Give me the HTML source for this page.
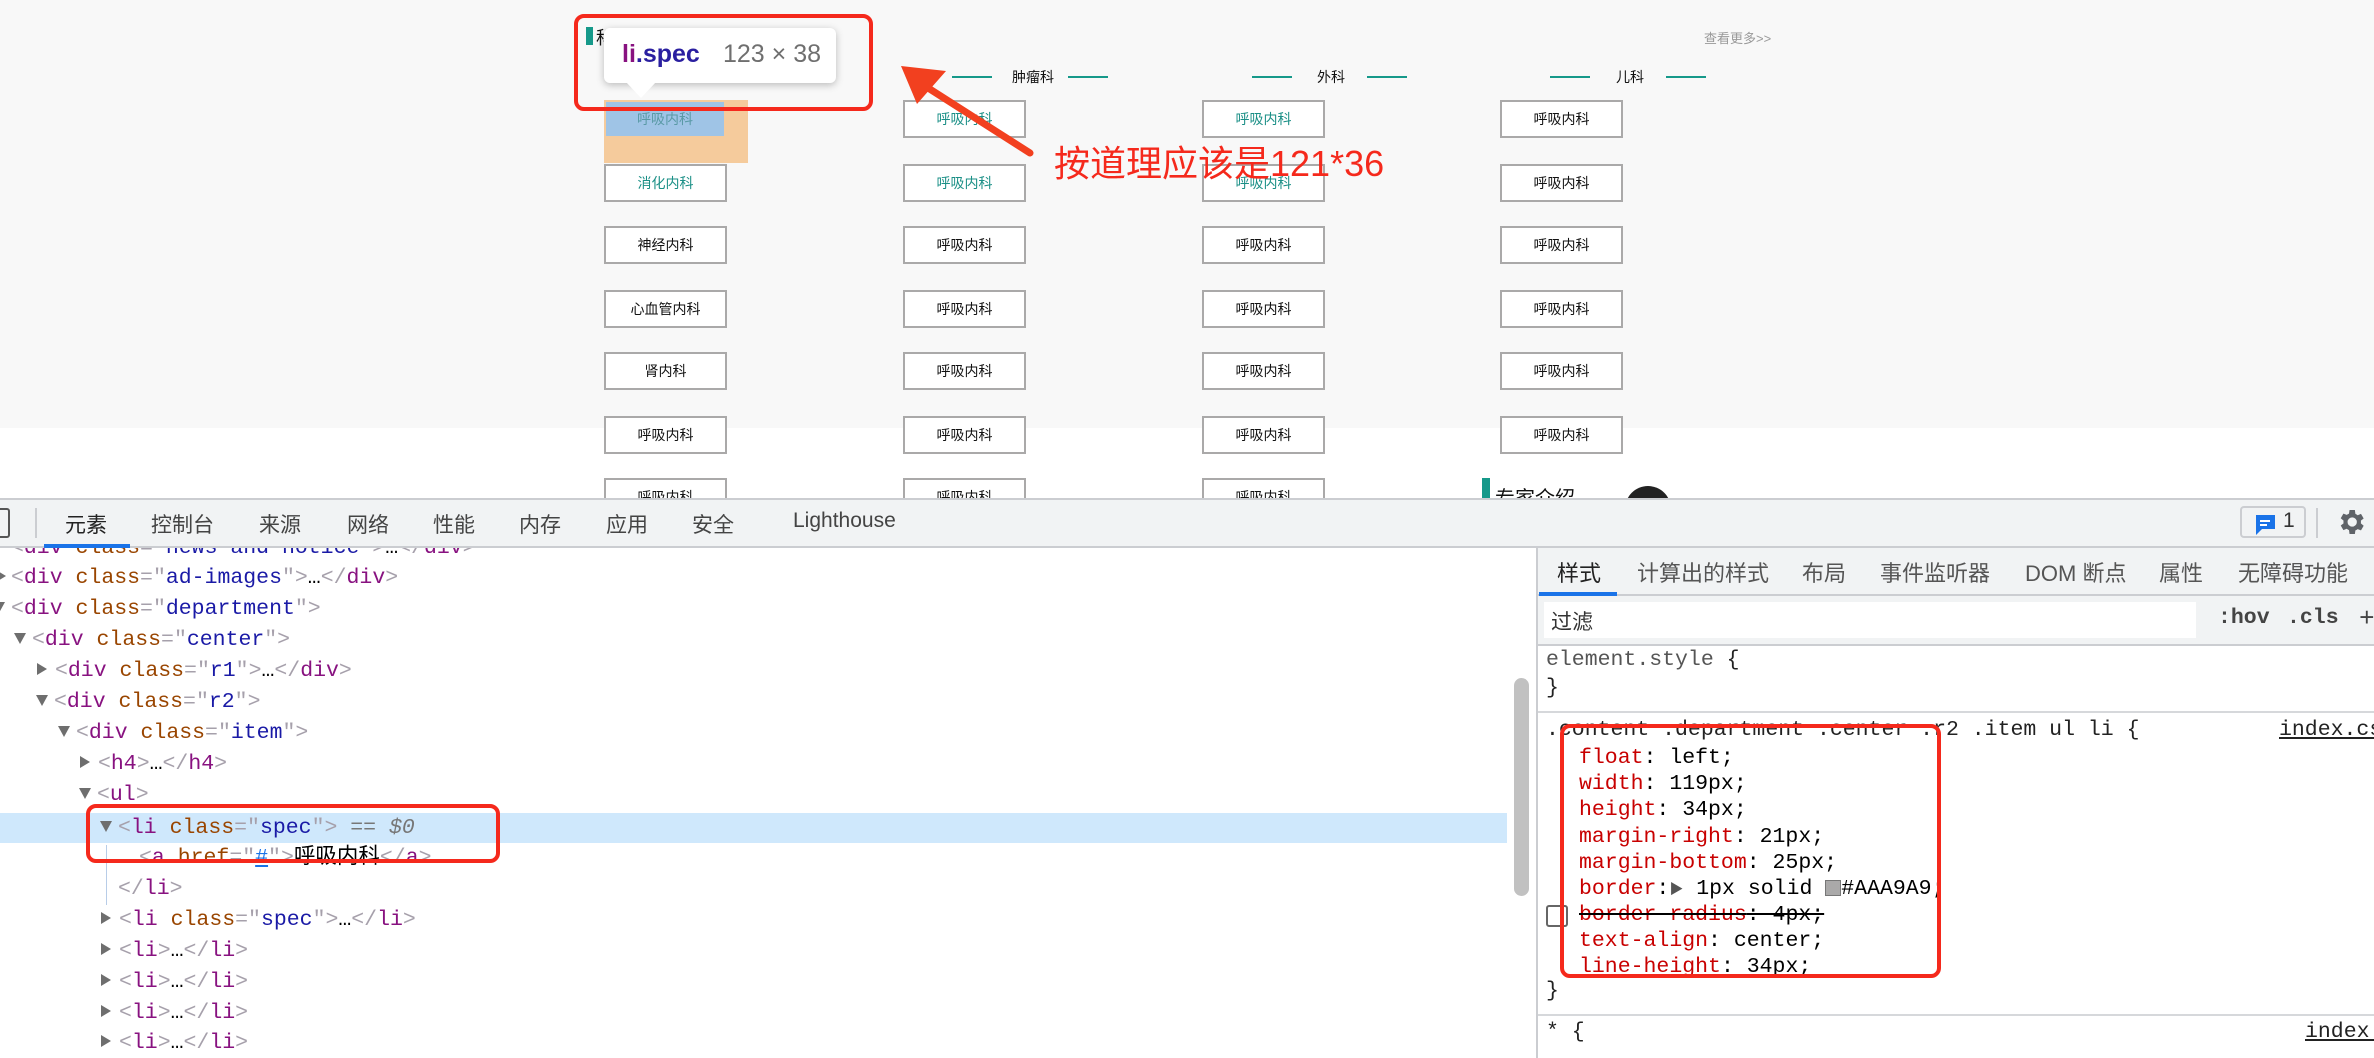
<!DOCTYPE html>
<html><head><meta charset="utf-8"><style>
*{margin:0;padding:0;box-sizing:border-box}
body{width:2374px;height:1058px;position:relative;overflow:hidden;background:#fff;font-family:"Liberation Sans","Noto Sans CJK SC",sans-serif}
.a{position:absolute}
.btn{position:absolute;width:123px;height:38px;border:2px solid #aaa9a9;background:#fff;text-align:center;line-height:34px;font-size:14px;color:#111;white-space:nowrap}
.t{color:#1a8f86}
.hd{position:absolute;top:67px;font-size:14px;color:#111;white-space:nowrap}
.ln{position:absolute;top:76px;width:40px;height:2px;background:#16998a}
.mono{font-family:"Liberation Mono","Noto Sans CJK SC",monospace;font-size:21.5px;white-space:nowrap}
.el{position:absolute;left:0;height:31px;line-height:31px}
.g{color:#a6a0ab}.p{color:#881280}.b{color:#994500}.v{color:#1a1aa6}
.tri{display:inline-block;width:0;height:0;border-left:6px solid transparent;border-right:6px solid transparent;border-top:11px solid #6e6e6e;margin-right:6px;vertical-align:1px}
.trr{display:inline-block;width:0;height:0;border-top:6px solid transparent;border-bottom:6px solid transparent;border-left:10px solid #6e6e6e;margin-right:8px;vertical-align:1px}
.tab{position:absolute;top:509px;font-size:21px;color:#444;white-space:nowrap}
.st{position:absolute;top:556px;font-size:22px;color:#555;white-space:nowrap}
.sp{position:absolute;left:1579px;height:26px;line-height:26px}
.r{color:#c80000}
</style></head><body>
<div class="a" style="left:0;top:0;width:2374px;height:428px;background:#f8f8f8"></div>
<div class="a" style="left:586px;top:27px;width:7px;height:18px;background:#16998a"></div>
<div class="a" style="left:596px;top:24px;font-size:18px;color:#111">科</div>
<div class="a" style="left:1704px;top:28px;font-size:13px;color:#999">查看更多&gt;&gt;</div>

<div class="ln" style="left:952px"></div><div class="hd" style="left:1012px">肿瘤科</div><div class="ln" style="left:1068px"></div>
<div class="ln" style="left:1252px"></div><div class="hd" style="left:1317px">外科</div><div class="ln" style="left:1367px"></div>
<div class="ln" style="left:1550px"></div><div class="hd" style="left:1616px">儿科</div><div class="ln" style="left:1666px"></div>

<div class="a" style="left:604px;top:100px;width:144px;height:63px;background:#f5cb9c"></div>
<div class="a" style="left:606px;top:102px;width:118px;height:34px;background:#9fc4e6;text-align:center;line-height:34px;font-size:14px;color:#5a9aa6">呼吸内科</div>

<div class="btn t" style="left:604px;top:164px">消化内科</div>
<div class="btn" style="left:604px;top:226px">神经内科</div>
<div class="btn" style="left:604px;top:290px">心血管内科</div>
<div class="btn" style="left:604px;top:352px">肾内科</div>
<div class="btn" style="left:604px;top:416px">呼吸内科</div>
<div class="btn" style="left:604px;top:478px">呼吸内科</div>

<div class="btn t" style="left:903px;top:100px">呼吸内科</div>
<div class="btn t" style="left:903px;top:164px">呼吸内科</div>
<div class="btn" style="left:903px;top:226px">呼吸内科</div>
<div class="btn" style="left:903px;top:290px">呼吸内科</div>
<div class="btn" style="left:903px;top:352px">呼吸内科</div>
<div class="btn" style="left:903px;top:416px">呼吸内科</div>
<div class="btn" style="left:903px;top:478px">呼吸内科</div>

<div class="btn t" style="left:1202px;top:100px">呼吸内科</div>
<div class="btn t" style="left:1202px;top:164px">呼吸内科</div>
<div class="btn" style="left:1202px;top:226px">呼吸内科</div>
<div class="btn" style="left:1202px;top:290px">呼吸内科</div>
<div class="btn" style="left:1202px;top:352px">呼吸内科</div>
<div class="btn" style="left:1202px;top:416px">呼吸内科</div>
<div class="btn" style="left:1202px;top:478px">呼吸内科</div>

<div class="btn" style="left:1500px;top:100px">呼吸内科</div>
<div class="btn" style="left:1500px;top:164px">呼吸内科</div>
<div class="btn" style="left:1500px;top:226px">呼吸内科</div>
<div class="btn" style="left:1500px;top:290px">呼吸内科</div>
<div class="btn" style="left:1500px;top:352px">呼吸内科</div>
<div class="btn" style="left:1500px;top:416px">呼吸内科</div>

<div class="a" style="left:1482px;top:478px;width:8px;height:22px;background:#16998a"></div>
<div class="a" style="left:1495px;top:482px;font-size:20px;color:#111">专家介绍</div>
<div class="a" style="left:1625px;top:486px;width:46px;height:46px;border-radius:50%;background:#222"></div>

<div class="a" style="left:604px;top:28px;width:232px;height:55px;background:#fff;border-radius:6px;box-shadow:0 2px 8px rgba(0,0,0,.25)"></div>
<div class="a" style="left:626px;top:82px;width:0;height:0;border-left:15px solid transparent;border-right:15px solid transparent;border-top:16px solid #fff"></div>
<div class="a" style="left:622px;top:40px;font-size:25px;font-weight:bold;color:#2a1fa0;white-space:nowrap"><span style="color:#881280">li</span>.spec</div>
<div class="a" style="left:723px;top:40px;font-size:25px;color:#6f6f6f;white-space:nowrap">123 × 38</div>
<div class="a" style="left:574px;top:14px;width:299px;height:97px;border:4px solid #f5291c;border-radius:10px"></div>

<svg class="a" style="left:0;top:0" width="1100" height="200"><line x1="1030" y1="153" x2="925" y2="86" stroke="#f2401f" stroke-width="7" stroke-linecap="round"/><polygon points="901,66 917,104 946,71" fill="#f2401f"/></svg>
<div class="a" style="left:1054px;top:135px;font-size:36px;color:#f5291c;white-space:nowrap">按道理应该是121*36</div>

<div class="a" style="left:0;top:498px;width:2374px;height:50px;background:#f1f3f4;border-top:2px solid #cbcdd1;border-bottom:2px solid #cbcdd1"></div>
<div class="a" style="left:-10px;top:508px;width:20px;height:30px;border:2px solid #555;border-radius:3px"></div>
<div class="a" style="left:35px;top:508px;width:2px;height:30px;background:#cbcdd1"></div>
<div class="tab" style="left:65px;color:#222">元素</div>
<div class="a" style="left:44px;top:544px;width:86px;height:4px;background:#1a73e8"></div>
<div class="tab" style="left:151px">控制台</div>
<div class="tab" style="left:259px">来源</div>
<div class="tab" style="left:347px">网络</div>
<div class="tab" style="left:433px">性能</div>
<div class="tab" style="left:519px">内存</div>
<div class="tab" style="left:606px">应用</div>
<div class="tab" style="left:692px">安全</div>
<div class="tab" style="left:793px">Lighthouse</div>
<div class="a" style="left:2240px;top:506px;width:66px;height:32px;border:2px solid #cbcdd1;border-radius:4px"></div>
<svg class="a" style="left:2254px;top:513px" width="24" height="24"><path d="M2 2h19v14H8l-6 6z" fill="#1a73e8"/><rect x="6" y="7" width="10" height="2" fill="#fff"/><rect x="6" y="11" width="7" height="2" fill="#fff"/></svg>
<div class="a" style="left:2283px;top:509px;font-size:21px;color:#333">1</div>
<div class="a" style="left:2316px;top:508px;width:2px;height:30px;background:#cbcdd1"></div>
<svg class="a" style="left:2335px;top:506px" width="32" height="32" viewBox="0 0 24 24"><path fill="#5f6368" d="M19.4 13a7.5 7.5 0 0 0 0-2l2.1-1.6-2-3.5-2.5 1a7 7 0 0 0-1.7-1L14.9 3h-4l-.4 2.7a7 7 0 0 0-1.7 1l-2.5-1-2 3.5L6.4 11a7.5 7.5 0 0 0 0 2l-2.1 1.6 2 3.5 2.5-1a7 7 0 0 0 1.7 1l.4 2.9h4l.4-2.7a7 7 0 0 0 1.7-1l2.5 1 2-3.5zM12.9 15.5a3.5 3.5 0 1 1 0-7 3.5 3.5 0 0 1 0 7z"/></svg>

<div class="a" style="left:0;top:813px;width:1507px;height:30px;background:#cfe8fc"></div>
<div class="a" style="left:106px;top:845px;width:1px;height:60px;background:#b8cde8"></div>
<div class="a mono" style="left:0;top:548px;width:1507px;height:510px;overflow:hidden">
<div class="el" style="top:-15px;left:11px"><span class="g">&lt;</span><span class="p">div</span> <span class="b">class</span><span class="g">="</span><span class="v">news-and-notice</span><span class="g">"&gt;</span>…<span class="g">&lt;/</span><span class="p">div</span><span class="g">&gt;</span></div>
<div class="el" style="top:15px;left:-4px"><span class="trr" style="margin-right:5px"></span><span class="g">&lt;</span><span class="p">div</span> <span class="b">class</span><span class="g">="</span><span class="v">ad-images</span><span class="g">"&gt;</span>…<span class="g">&lt;/</span><span class="p">div</span><span class="g">&gt;</span></div>
<div class="el" style="top:46px;left:-7px"><span class="tri" style="margin-right:6px"></span><span class="g">&lt;</span><span class="p">div</span> <span class="b">class</span><span class="g">="</span><span class="v">department</span><span class="g">"&gt;</span></div>
<div class="el" style="top:77px;left:14px"><span class="tri"></span><span class="g">&lt;</span><span class="p">div</span> <span class="b">class</span><span class="g">="</span><span class="v">center</span><span class="g">"&gt;</span></div>
<div class="el" style="top:108px;left:37px"><span class="trr"></span><span class="g">&lt;</span><span class="p">div</span> <span class="b">class</span><span class="g">="</span><span class="v">r1</span><span class="g">"&gt;</span>…<span class="g">&lt;/</span><span class="p">div</span><span class="g">&gt;</span></div>
<div class="el" style="top:139px;left:36px"><span class="tri"></span><span class="g">&lt;</span><span class="p">div</span> <span class="b">class</span><span class="g">="</span><span class="v">r2</span><span class="g">"&gt;</span></div>
<div class="el" style="top:170px;left:58px"><span class="tri"></span><span class="g">&lt;</span><span class="p">div</span> <span class="b">class</span><span class="g">="</span><span class="v">item</span><span class="g">"&gt;</span></div>
<div class="el" style="top:201px;left:80px"><span class="trr"></span><span class="g">&lt;</span><span class="p">h4</span><span class="g">&gt;</span>…<span class="g">&lt;/</span><span class="p">h4</span><span class="g">&gt;</span></div>
<div class="el" style="top:232px;left:79px"><span class="tri"></span><span class="g">&lt;</span><span class="p">ul</span><span class="g">&gt;</span></div>
<div class="el" style="top:265px;left:100px"><span class="tri"></span><span class="g">&lt;</span><span class="p">li</span> <span class="b">class</span><span class="g">="</span><span class="v">spec</span><span class="g">"&gt;</span> <span style="color:#777">== <i>$0</i></span></div>
<div class="el" style="top:295px;left:139px"><span class="g">&lt;</span><span class="p">a</span> <span class="b">href</span><span class="g">="</span><span style="color:#1a73e8;text-decoration:underline">#</span><span class="g">"&gt;</span>呼吸内科<span class="g">&lt;/</span><span class="p">a</span><span class="g">&gt;</span></div>
<div class="el" style="top:326px;left:118px"><span class="g">&lt;/</span><span class="p">li</span><span class="g">&gt;</span></div>
<div class="el" style="top:357px;left:101px"><span class="trr"></span><span class="g">&lt;</span><span class="p">li</span> <span class="b">class</span><span class="g">="</span><span class="v">spec</span><span class="g">"&gt;</span>…<span class="g">&lt;/</span><span class="p">li</span><span class="g">&gt;</span></div>
<div class="el" style="top:388px;left:101px"><span class="trr"></span><span class="g">&lt;</span><span class="p">li</span><span class="g">&gt;</span>…<span class="g">&lt;/</span><span class="p">li</span><span class="g">&gt;</span></div>
<div class="el" style="top:419px;left:101px"><span class="trr"></span><span class="g">&lt;</span><span class="p">li</span><span class="g">&gt;</span>…<span class="g">&lt;/</span><span class="p">li</span><span class="g">&gt;</span></div>
<div class="el" style="top:450px;left:101px"><span class="trr"></span><span class="g">&lt;</span><span class="p">li</span><span class="g">&gt;</span>…<span class="g">&lt;/</span><span class="p">li</span><span class="g">&gt;</span></div>
<div class="el" style="top:480px;left:101px"><span class="trr"></span><span class="g">&lt;</span><span class="p">li</span><span class="g">&gt;</span>…<span class="g">&lt;/</span><span class="p">li</span><span class="g">&gt;</span></div>
</div>
<div class="a" style="left:86px;top:804px;width:414px;height:59px;border:4px solid #f5291c;border-radius:10px"></div>
<div class="a" style="left:1514px;top:678px;width:15px;height:218px;background:#c1c1c1;border-radius:8px"></div>

<div class="a" style="left:1536px;top:548px;width:2px;height:510px;background:#cbcdd1"></div>
<div class="a" style="left:1538px;top:548px;width:836px;height:48px;background:#f1f3f4;border-bottom:2px solid #cbcdd1"></div>
<div class="st" style="left:1557px;color:#222">样式</div>
<div class="a" style="left:1539px;top:592px;width:78px;height:4px;background:#1a73e8"></div>
<div class="st" style="left:1637px">计算出的样式</div>
<div class="st" style="left:1802px">布局</div>
<div class="st" style="left:1880px">事件监听器</div>
<div class="st" style="left:2025px">DOM 断点</div>
<div class="st" style="left:2159px">属性</div>
<div class="st" style="left:2238px">无障碍功能</div>
<div class="a" style="left:1538px;top:596px;width:836px;height:50px;background:#f1f3f4;border-bottom:2px solid #cbcdd1"></div>
<div class="a" style="left:1544px;top:602px;width:652px;height:36px;background:#fff"></div>
<div class="a" style="left:1551px;top:606px;font-size:21px;color:#333">过滤</div>
<div class="a mono" style="left:2218px;top:606px;font-weight:bold;color:#444">:hov</div>
<div class="a mono" style="left:2287px;top:606px;font-weight:bold;color:#444">.cls</div>
<div class="a mono" style="left:2359px;top:604px;font-size:26px;color:#444">+</div>
<div class="a mono" style="left:1546px;top:646px;line-height:28px;color:#555">element.style <span style="color:#222">{</span><br><span style="color:#222">}</span></div>
<div class="a" style="left:1538px;top:711px;width:836px;height:2px;background:#d6d8db"></div>
<div class="a mono" style="left:1546px;top:718px;color:#222">.content .department .center .r2 .item ul li {</div>
<div class="a mono" style="left:2279px;top:718px;color:#222;text-decoration:underline">index.css</div>
<div class="mono">
<div class="a sp" style="top:745px"><span class="r">float</span>: left;</div>
<div class="a sp" style="top:771px"><span class="r">width</span>: 119px;</div>
<div class="a sp" style="top:797px"><span class="r">height</span>: 34px;</div>
<div class="a sp" style="top:824px"><span class="r">margin-right</span>: 21px;</div>
<div class="a sp" style="top:850px"><span class="r">margin-bottom</span>: 25px;</div>
<div class="a sp" style="top:876px"><span class="r">border</span>:<span style="font-size:14px;color:#555">▶</span> 1px solid <span style="display:inline-block;width:16px;height:16px;background:#aaa9a9;border:1px solid #777;vertical-align:-2px"></span>#AAA9A9;</div>
<div class="a sp" style="top:902px;text-decoration:line-through"><span class="r">border-radius</span>: 4px;</div>
<div class="a sp" style="top:928px"><span class="r">text-align</span>: center;</div>
<div class="a sp" style="top:954px"><span class="r">line-height</span>: 34px;</div>
<div class="a" style="left:1546px;top:979px;color:#222">}</div>
<div class="a" style="left:1546px;top:1020px;color:#222">* {</div>
<div class="a" style="left:2305px;top:1020px;color:#222;text-decoration:underline">index.css</div>
</div>
<div class="a" style="left:1546px;top:905px;width:22px;height:22px;border:2px solid #666;border-radius:3px"></div>
<div class="a" style="left:1538px;top:1014px;width:836px;height:2px;background:#d6d8db"></div>
<div class="a" style="left:1560px;top:724px;width:381px;height:254px;border:4px solid #f5291c;border-radius:10px"></div>
</body></html>
